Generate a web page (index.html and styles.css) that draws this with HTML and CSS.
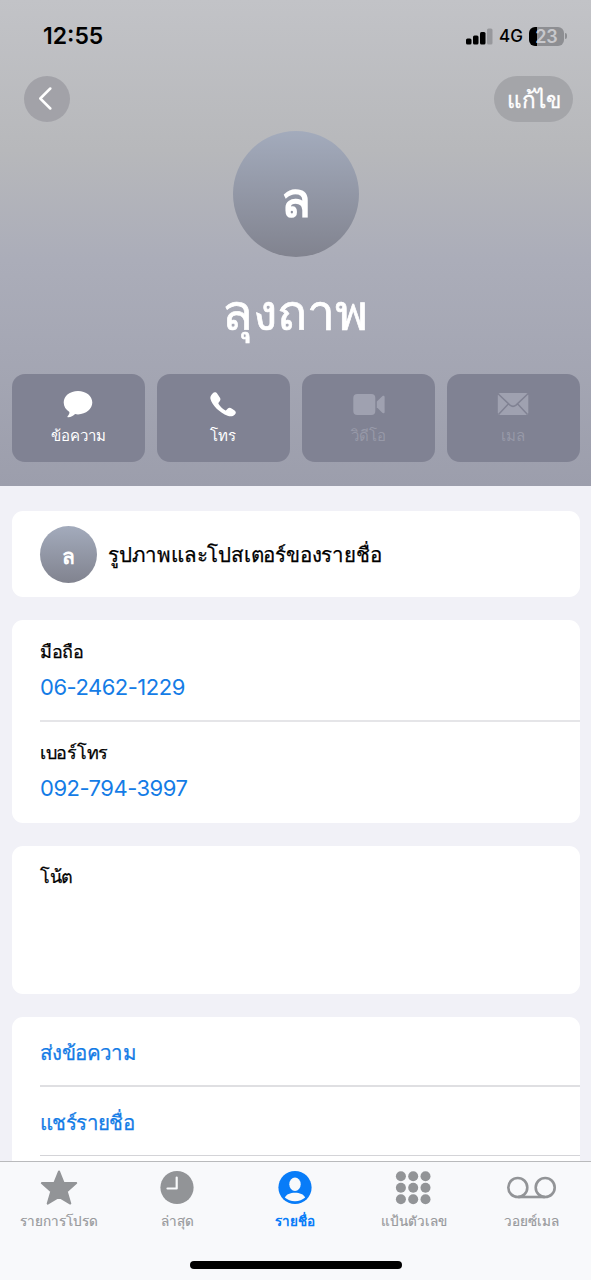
FILE: index.html
```html
<!DOCTYPE html>
<html lang="th">
<head>
<meta charset="utf-8">
<title>รายชื่อ</title>
<link rel="stylesheet" href="styles.css">
</head>
<body>
<div class="screen">
  <header class="hero">
    <div class="status">
      <span class="clock">12:55</span>
      <div class="status-right">
        <svg class="signal" width="27" height="17" viewBox="0 0 27 17"><rect x="0" y="10.500" width="5.500" height="6" rx="1.500"/><rect x="7" y="7.500" width="5.500" height="9" rx="1.500"/><rect x="14" y="4" width="5.500" height="12.500" rx="1.500"/><rect x="21" y="0.500" width="5.500" height="16" rx="1.500" fill="#97989c"/></svg>
        <span class="network">4G</span>
        <span class="battery">23</span>
        <span class="battery-tip"></span>
      </div>
    </div>
    <div class="nav">
      <button class="back"><svg width="14" height="24" viewBox="0 0 14 24"><path d="M12.300 1.500 2.300 11.500 12.300 21.500" fill="none" stroke="#fff" stroke-width="2.500" stroke-linecap="round" stroke-linejoin="round"/></svg></button>
      <button class="edit">แก้ไข</button>
    </div>
    <div class="avatar"><span>ล</span></div>
    <h1 class="name">ลุงถาพ</h1>
    <div class="actions">
      <button class="action">
        <svg width="34" height="30" viewBox="0 0 34 30"><path d="M17 2C8.800 2 2.700 7.100 2.700 13.600c0 3.900 2.200 7.300 5.700 9.400.2 1.600-.7 2.900-1.800 4.200-.5.700 0 1.200.8 1.100 2.500-.2 4.900-1.300 6.700-3.200.9.200 1.900.3 2.900.3 8.100 0 14.300-5.300 14.300-11.800S25.100 2 17 2z" fill="#fff"/></svg>
        <span>ข้อความ</span>
      </button>
      <button class="action">
        <svg width="34" height="30" viewBox="0 0 34 30"><path d="M6.600 4.500C8.100 3 9.900 2.900 11.300 4.800l2.500 3.700c1 1.500.8 2.700-.3 4l-.8 1c-.4.500-.4.900-.1 1.400 1.600 2.600 3.700 4.700 6.500 6.300.5.300.9.300 1.300-.1l1.200-1.300c1.200-1.200 2.500-1.400 4-.4l3 2c1.600 1.200 1.600 2.500.3 4-1.900 2.100-4.400 2.300-7.300 1.300C13.900 23.900 6 16.200 4.400 9.700 4.100 7.700 5 6 6.600 4.500z" fill="#fff"/></svg>
        <span>โทร</span>
      </button>
      <button class="action disabled">
        <svg width="34" height="30" viewBox="0 0 34 30"><rect x="2.300" y="5" width="22" height="21" rx="4" fill="#9fa1b0"/><path d="M25.800 12.600 31.300 7.300c1-.8 2.300-.5 2.300.8v14.800c0 1.300-1.300 1.600-2.300.8L25.800 18.300z" fill="#9fa1b0"/></svg>
        <span>วิดีโอ</span>
      </button>
      <button class="action disabled">
        <svg width="34" height="30" viewBox="0 0 34 30"><rect x="1.800" y="4" width="30.500" height="22" rx="2.500" fill="#9fa1b0"/><path d="m2 4.800 12 11.300q3 2.500 6 0l12-11.300M2.500 25.500l9.800-10.500M31.500 25.500l-9.800-10.500" fill="none" stroke="#808293" stroke-width="1.500"/></svg>
        <span>เมล</span>
      </button>
    </div>
  </header>

  <main class="content">
    <section class="card poster">
      <div class="avatar small"><span>ล</span></div>
      <span class="poster-label">รูปภาพและโปสเตอร์ของรายชื่อ</span>
    </section>
    <section class="card">
      <div class="phone"><span class="label">มือถือ</span><a class="number">06-2462-1229</a></div>
      <div class="phone second"><span class="label">เบอร์โทร</span><a class="number">092-794-3997</a></div>
    </section>
    <section class="card note"><span class="label">โน้ต</span></section>
    <section class="card links">
      <a class="link">ส่งข้อความ</a>
      <a class="link share">แชร์รายชื่อ</a>
    </section>
  </main>

  <footer class="tabbar">
    <nav class="tabs">
      <a class="tab">
        <svg width="40" height="36" viewBox="0 0 40 36"><path d="m20 1.500 4.600 11.300 12.600.3-9.500 8.300 3.600 12.200L20 27 8.700 33.600l3.600-12.200-9.500-8.300 12.600-.3z" fill="#929497" stroke="#929497" stroke-width="2" stroke-linejoin="round"/></svg>
        <span>รายการโปรด</span>
      </a>
      <a class="tab">
        <svg width="40" height="36" viewBox="0 0 40 36"><circle cx="20" cy="17.500" r="16.600" fill="#929497"/><path d="M19.700 7.500v11H10.500" fill="none" stroke="#f8f9fb" stroke-width="2.200" stroke-linecap="round" stroke-linejoin="round"/></svg>
        <span>ล่าสุด</span>
      </a>
      <a class="tab active">
        <svg width="40" height="36" viewBox="0 0 40 36"><circle cx="20" cy="17.500" r="16.600" fill="#087cf8"/><ellipse cx="20" cy="14.200" rx="5.700" ry="6.700" fill="#f8f9fb"/><path d="M9.800 27.500c1.500-3.300 5.500-4.800 10.200-4.800s8.700 1.500 10.200 4.800c-2.800 2.400-6 3.700-10.200 3.700s-7.400-1.300-10.200-3.700z" fill="#f8f9fb"/></svg>
        <span>รายชื่อ</span>
      </a>
      <a class="tab">
        <svg width="40" height="36" viewBox="0 0 40 36" fill="#929497"><circle cx="6.900" cy="6.200" r="5"/><circle cx="19.200" cy="6.200" r="5"/><circle cx="31.500" cy="6.200" r="5"/><circle cx="6.900" cy="17.700" r="5"/><circle cx="19.200" cy="17.700" r="5"/><circle cx="31.500" cy="17.700" r="5"/><circle cx="6.900" cy="29.200" r="5"/><circle cx="19.200" cy="29.200" r="5"/><circle cx="31.500" cy="29.200" r="5"/></svg>
        <span>แป้นตัวเลข</span>
      </a>
      <a class="tab">
        <svg width="50" height="36" viewBox="0 0 50 36" fill="none" stroke="#929497" stroke-width="2.600"><circle cx="10.800" cy="17.500" r="9.500"/><circle cx="38.200" cy="17.500" r="9.500"/><path d="M10.800 27h27.400"/></svg>
        <span>วอยซ์เมล</span>
      </a>
    </nav>
    <div class="home-indicator"></div>
  </footer>
</div>
</body>
</html>
```
FILE: styles.css
```css
* { box-sizing: border-box; }
body {
  margin: 0;
  font-family: Inter, "Liberation Sans", sans-serif;
  color: #000;
}
button {
  border: 0;
  padding: 0;
  font-family: inherit;
  color: #fff;
}
svg { display: block; flex: none; }
span, a { white-space: nowrap; }

.screen {
  width: 591px;
  height: 1280px;
  display: flex;
  flex-direction: column;
  overflow: hidden;
  background: #f1f1f7;
}

.hero {
  height: 486px;
  flex: none;
  display: flex;
  flex-direction: column;
  align-items: center;
  background: linear-gradient(#c2c3c7 0, #b7b8bb 150px, #abadb9 260px, #a5a7b4 350px, #9c9eac 486px);
}
.status {
  align-self: stretch;
  height: 76px;
  padding: 24px 24px 0 43px;
  display: flex;
  justify-content: space-between;
}
.clock { font-size: 23px; font-weight: 600; line-height: 24px; }
.status-right { display: flex; height: 24px; align-items: center; }
.signal { margin-right: 6px; }
.network { width: 30px; font-size: 17px; font-weight: 500; line-height: 24px; }
.battery {
  width: 35px;
  height: 19px;
  border-radius: 6px;
  background: linear-gradient(90deg, #000 8px, #8d8e92 8px);
  color: #c7c8cc;
  font-size: 18px;
  font-weight: 600;
  line-height: 19px;
  text-align: center;
}
.battery-tip { width: 2px; height: 6px; margin-left: 1px; border-radius: 0 2px 2px 0; background: #8d8e92; }

.nav {
  align-self: stretch;
  height: 55px;
  padding: 0 18px 0 24px;
  display: flex;
  justify-content: space-between;
}
.back, .edit { height: 46px; border-radius: 23px; background: #a2a2a8; }
.back { width: 46px; padding-left: 14px; }
.edit { width: 79px; background: #a4a5a9; font-size: 22.500px; line-height: 48px; letter-spacing: -0.500px; -webkit-text-stroke: 0.300px; }

.avatar {
  width: 126px;
  height: 126px;
  flex: none;
  border-radius: 50%;
  background: linear-gradient(#a3abbc, #81838f);
  color: #fff;
  font-size: 49px;
  font-weight: 700;
  line-height: 138px;
  text-align: center;
}
.name {
  height: 117px;
  margin: 0;
  padding-right: 2px;
  color: #fff;
  font-size: 50px;
  font-weight: 400;
  line-height: 111px;
  -webkit-text-stroke: 0.700px;
}
.actions {
  align-self: stretch;
  padding: 0 11px 0 12px;
  display: grid;
  grid-template-columns: repeat(4, 1fr);
  gap: 12px;
}
.action {
  height: 88px;
  padding: 15px 1px 0 0;
  display: flex;
  flex-direction: column;
  align-items: center;
  gap: 6px;
  border-radius: 13px;
  background: #808293;
  font-size: 15px;
  line-height: 22px;
}
.disabled { color: #9799a8; }

.content {
  height: 675px;
  flex: none;
  padding: 25px 11px 0 12px;
  display: flex;
  flex-direction: column;
  gap: 23px;
  overflow: hidden;
}
.card { flex: none; border-radius: 11px; background: #fff; }
.poster { height: 86px; padding-left: 28px; display: flex; align-items: center; gap: 11px; }
.small { width: 57px; height: 57px; font-size: 21px; line-height: 61px; }
.poster-label { font-size: 20.500px; line-height: 30px; padding-top: 2px; letter-spacing: -0.200px; -webkit-text-stroke: 0.250px; }
.phone {
  height: 102px;
  margin-left: 28px;
  padding-top: 19px;
  display: flex;
  flex-direction: column;
  gap: 6px;
  border-bottom: 2px solid #e5e5e8;
}
.second { height: 101px; padding-top: 18px; border-bottom: 0; }
.label { font-size: 18px; line-height: 26px; letter-spacing: -0.300px; -webkit-text-stroke: 0.250px; }
.number { color: #147ce6; font-size: 22px; line-height: 32px; letter-spacing: -0.500px; }
.note { height: 148px; padding: 18px 28px; }
.links { height: 180px; padding-left: 28px; display: flex; flex-direction: column; }
.link {
  height: 70px;
  border-bottom: 2px solid #dfdfe2;
  color: #147ce6;
  font-size: 20.500px;
  line-height: 71px;
  letter-spacing: -0.600px;
  -webkit-text-stroke: 0.250px;
}
.share { height: 69px; border-bottom-width: 1px; border-color: #d4d4d8; }

.tabbar {
  height: 119px;
  flex: none;
  display: flex;
  flex-direction: column;
  align-items: center;
  justify-content: space-between;
  padding-bottom: 11px;
  border-top: 1px solid #b9babc;
  background: #f8f9fb;
}
.tabs { align-self: stretch; display: grid; grid-template-columns: repeat(5, 1fr); }
.tab {
  padding-top: 8px;
  display: flex;
  flex-direction: column;
  align-items: center;
  gap: 4px;
  color: #999a9d;
  font-size: 13.500px;
  line-height: 22px;
  -webkit-text-stroke: 0.200px;
}
.active { color: #087cf8; font-weight: 700; -webkit-text-stroke: 0; }
.home-indicator { width: 212px; height: 8px; border-radius: 4px; background: #000; }
```
